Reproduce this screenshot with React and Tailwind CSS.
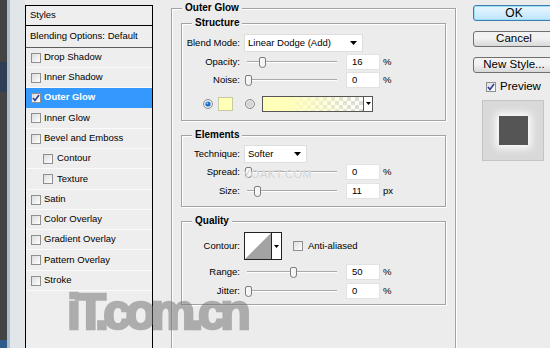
import React from "react";

const Tri = ({ className = "" }) => (
  <svg width="7" height="4" viewBox="0 0 7 4" className={className}>
    <path d="M0 0 H7 L3.5 4 Z" fill="#000" />
  </svg>
);

const Check = ({ checked = false }) => (
  <div className="w-[10px] h-[10px] shrink-0 border border-[#8e8f8f] bg-[linear-gradient(135deg,#dcdcdc,#ffffff)] flex items-center justify-center">
    {checked && (
      <svg width="8" height="8" viewBox="0 0 8 8">
        <path d="M1 4 L3 6.5 L7 1" stroke="#2a3f9c" strokeWidth="1.6" fill="none" />
      </svg>
    )}
  </div>
);

const Radio = ({ on = false }) => (
  <svg width="10" height="10" viewBox="0 0 10 10" className="shrink-0">
    <circle cx="5" cy="5" r="4.5" fill={on ? "#e8eef4" : "#e6e6e6"} stroke="#8a8a8a" />
    {on ? <circle cx="5" cy="5" r="2.6" fill="#1d6fc0" /> : <circle cx="5" cy="5" r="3" fill="#d6d6d6" />}
    {on && <circle cx="4.3" cy="4.3" r="1" fill="#7fc2ff" />}
  </svg>
);

const Thumb = () => (
  <svg width="7" height="11" viewBox="0 0 7 11">
    <path d="M0.5 2 Q0.5 0.5 2 0.5 H5 Q6.5 0.5 6.5 2 V8 Q6.5 10.5 3.5 10.5 Q0.5 10.5 0.5 8 Z" fill="#f4f4f4" stroke="#7c7c7c" />
    <path d="M2 2 V8" stroke="#ffffff" />
  </svg>
);

const Slider = ({ pos }) => (
  <div className="relative w-[96px] h-[18px] flex items-center">
    <div className="mx-[3px] w-[90px] h-[2px] border-t border-[#a9a9a9] border-b border-b-[#ffffff]" />
    <div className="absolute top-[4px]" style={{ left: pos - 3 }}>
      <Thumb />
    </div>
  </div>
);

const Input = ({ v }) => (
  <div className="ml-[6px] w-[34px] h-[16px] bg-white border border-[#e2e2e2] pl-[5px] flex items-center leading-none">
    {v}
  </div>
);

const SliderRow = ({ label, pos, v, unit = "%", mt = "" }) => (
  <div className={`flex items-center h-[18px] ${mt}`}>
    <div className="w-[58px] text-right">{label}</div>
    <div className="ml-[4px] flex items-center">
      <Slider pos={pos} />
      <Input v={v} />
      <span className="ml-[3px]">{unit}</span>
    </div>
  </div>
);

const Group = ({ title, h, className = "", children }) => (
  <div
    className={`border border-[#a3a3a3] shadow-[1px_1px_0_#ffffff,inset_1px_1px_0_#ffffff] ${h} ${className}`}
  >
    <div className="-mt-[7px] ml-[10px] px-[3px] w-fit bg-[#ececec] font-bold text-[10px] leading-[12px]">
      {title}
    </div>
    {children}
  </div>
);

const items = [
  { t: "Drop Shadow", h: "h-[20px]" },
  { t: "Inner Shadow", h: "h-[20px]" },
  { t: "Outer Glow", h: "h-[20px]", sel: true },
  { t: "Inner Glow", h: "h-[21px]" },
  { t: "Bevel and Emboss", h: "h-[20px]" },
  { t: "Contour", h: "h-[20px]", sub: true },
  { t: "Texture", h: "h-[21px]", sub: true },
  { t: "Satin", h: "h-[20px]" },
  { t: "Color Overlay", h: "h-[20px]" },
  { t: "Gradient Overlay", h: "h-[20px]" },
  { t: "Pattern Overlay", h: "h-[21px]" },
  { t: "Stroke", h: "h-[20px]" },
];

export default function App() {
  return (
    <div className="relative w-[550px] h-[348px] overflow-hidden bg-[#ececec] flex font-['Liberation_Sans',Arial,sans-serif] text-[9.5px] text-black">
      {/* left window edge */}
      <div className="flex h-full shrink-0">
        <div className="w-[7px] h-full bg-[#434343] flex flex-col">
          <div className="h-[62px]" />
          <div className="h-[30px] bg-[#2c3f57]" />
          <div className="flex-1" />
          <div className="h-[8px] bg-[#2e5c8a]" />
        </div>
        <div className="w-[3px] h-full bg-[#aebccb]" />
        <div className="w-[15px] h-full bg-[#e3e6e9]" />
      </div>

      {/* styles list */}
      <div className="w-[128px] shrink-0 mt-[5px] h-[350px] border border-black bg-[#eeeeee] flex flex-col">
        <div className="h-[20px] border-b border-black pl-[4px] flex items-center">Styles</div>
        <div className="h-[22px] border-b border-[#5c5c5c] pl-[4px] flex items-center">
          Blending Options: Default
        </div>
        {items.map((it) => (
          <div
            key={it.t}
            className={`${it.h} border-b flex items-center ${
              it.sel
                ? "bg-[#3399ff] border-[#3399ff] text-white font-bold"
                : "border-[#fafafa]"
            } ${it.sub ? "pl-[17px]" : "pl-[5px]"}`}
          >
            <Check checked={it.sel} />
            <span className={it.sub ? "ml-[4px]" : "ml-[3px]"}>{it.t}</span>
          </div>
        ))}
      </div>

      <div className="w-[18px] shrink-0" />

      {/* Outer Glow */}
      <div className="w-[285px] shrink-0 mt-[8px] h-[350px] border border-[#a3a3a3] shadow-[1px_0_0_#ffffff,inset_1px_1px_0_#ffffff]">
        <div className="-mt-[7px] ml-[10px] px-[3px] w-fit bg-[#ececec] font-bold text-[10px] leading-[12px]">
          Outer Glow
        </div>
        <div className="px-[9px] pt-[9px] flex flex-col">
          {/* Structure */}
          <Group title="Structure" h="h-[98px]">
            <div className="mt-[5px] flex items-center h-[18px]">
              <div className="w-[58px] text-right">Blend Mode:</div>
              <div className="ml-[4px] w-[119px] h-[18px] bg-white border border-[#dedede] pl-[3px] pr-[5px] flex items-center">
                <span>Linear Dodge (Add)</span>
                <Tri className="ml-auto" />
              </div>
            </div>
            <SliderRow label="Opacity:" pos={18} v="16" mt="mt-[1px]" />
            <SliderRow label="Noise:" pos={4} v="0" />
            <div className="mt-[6px] h-[17px] flex items-center">
              <div className="ml-[21px]">
                <Radio on />
              </div>
              <div className="ml-[5px] w-[15px] h-[14px] bg-[#ffffb8] border border-[#c9c9a0]" />
              <div className="ml-[12px]">
                <Radio />
              </div>
              <div className="ml-[7px] flex h-[16px] border border-[#555]">
                <div className="w-[100px] h-full [background-image:linear-gradient(to_right,#ffffb8_0%,#ffffbc_25%,rgba(255,255,200,0)_100%),repeating-conic-gradient(#d9d9d9_0_25%,#ffffff_0_50%)] [background-size:100%_100%,8px_8px]" />
                <div className="w-[9px] h-full bg-white border-l border-[#555] flex items-center justify-center">
                  <svg width="5" height="3" viewBox="0 0 5 3">
                    <path d="M0 0 H5 L2.5 3 Z" fill="#000" />
                  </svg>
                </div>
              </div>
            </div>
          </Group>

          {/* Elements */}
          <Group title="Elements" h="h-[72px]" className="mt-[14px]">
            <div className="mt-[4px] flex items-center h-[18px]">
              <div className="w-[58px] text-right">Technique:</div>
              <div className="ml-[4px] w-[63px] h-[18px] bg-white border border-[#dedede] pl-[3px] pr-[5px] flex items-center">
                <span>Softer</span>
                <Tri className="ml-auto" />
              </div>
            </div>
            <SliderRow label="Spread:" pos={4} v="0" />
            <SliderRow label="Size:" pos={13} v="11" unit="px" mt="mt-[1px]" />
          </Group>

          {/* Quality */}
          <Group title="Quality" h="h-[84px]" className="mt-[14px]">
            <div className="mt-[5px] flex items-center h-[28px]">
              <div className="w-[58px] text-right">Contour:</div>
              <div className="ml-[4px] flex h-[28px] border border-[#222]">
                <svg width="26" height="26" viewBox="0 0 26 26" className="bg-white">
                  <path d="M0 26 L26 0 V26 Z" fill="#a3a3a3" />
                </svg>
                <div className="w-[10px] h-full bg-white border-l border-[#222] flex items-center justify-center">
                  <svg width="5" height="3" viewBox="0 0 5 3">
                    <path d="M0 0 H5 L2.5 3 Z" fill="#000" />
                  </svg>
                </div>
              </div>
              <div className="ml-[11px]">
                <Check />
              </div>
              <span className="ml-[5px]">Anti-aliased</span>
            </div>
            <SliderRow label="Range:" pos={49} v="50" mt="mt-[3px]" />
            <SliderRow label="Jitter:" pos={4} v="0" mt="mt-[1px]" />
          </Group>
        </div>
      </div>

      <div className="w-[17px] shrink-0" />

      {/* buttons */}
      <div className="w-[82px] shrink-0 pt-[5px] flex flex-col text-[11.5px]">
        <div className="h-[16px] rounded-[3px] border border-[#3c7fb1] bg-[linear-gradient(#eaf6fd,#bee6fd)] shadow-[inset_0_0_0_1px_#9edcf7] flex items-center justify-center leading-none text-[12px]">
          OK
        </div>
        <div className="mt-[10px] h-[16px] rounded-[3px] border border-[#707070] bg-[linear-gradient(#f2f2f2_45%,#d8d8d8)] flex items-center justify-center leading-none">
          Cancel
        </div>
        <div className="mt-[10px] h-[16px] rounded-[3px] border border-[#707070] bg-[linear-gradient(#f2f2f2_45%,#d8d8d8)] flex items-center justify-center leading-none">
          New Style...
        </div>
        <div className="mt-[7px] h-[14px] flex items-center pl-[13px]">
          <Check checked />
          <span className="ml-[4px]">Preview</span>
        </div>
        <div className="mt-[6px] ml-[9px] w-[62px] h-[61px] border border-[#c4c4c4] bg-[#d9d9d9] flex items-center justify-center">
          <div className="w-[29px] h-[29px] bg-[#555555] shadow-[0_0_8px_3px_#ffffff]" />
        </div>
      </div>

      {/* watermarks */}
      <div className="absolute left-[243px] top-[166px] text-[11px] tracking-[0.5px] text-[#d0d0d0] [text-shadow:0_0_1px_#ffffff] pointer-events-none">
        YOAKT.COM
      </div>
      <div className="absolute left-[67px] top-[287px] text-[50px] leading-none font-['Liberation_Sans',Arial,sans-serif] font-bold tracking-[-5.5px] text-[#6e6e6e] [-webkit-text-stroke:2.5px_#6e6e6e] opacity-50 pointer-events-none">
        iT.com.cn
      </div>
    </div>
  );
}
